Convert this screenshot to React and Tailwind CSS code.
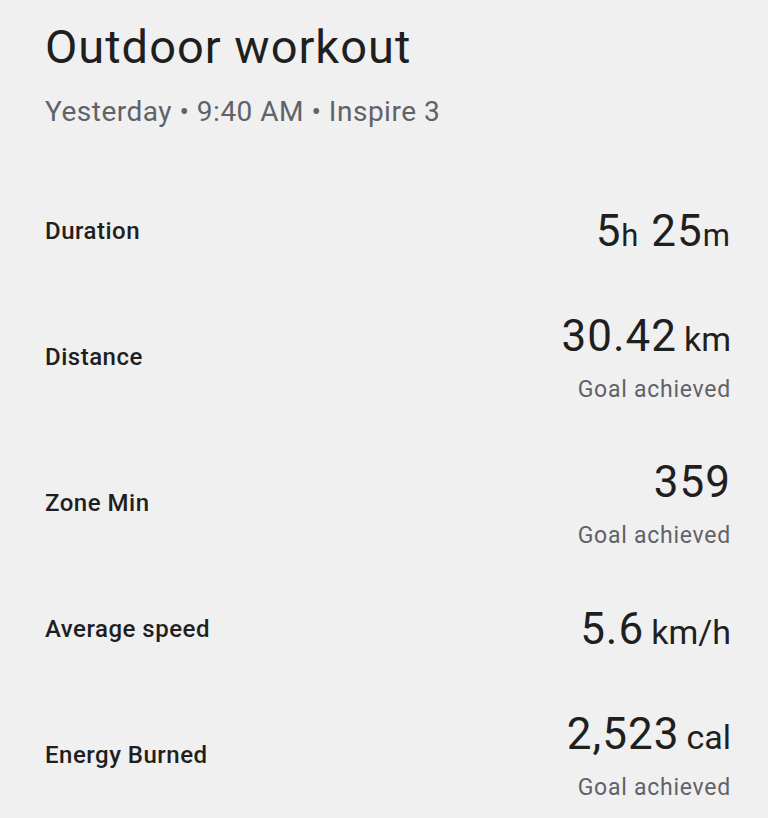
import React from "react";

const rows = [
  { label: "Duration", value: <><span>5</span><span className="text-[31px] leading-none">h</span><span> 25</span><span className="text-[31px] leading-none">m</span></>, goal: false },
  { label: "Distance", value: <><span>30.42</span><span className="ml-[7px] text-[34px] leading-none tracking-normal">km</span></>, goal: true },
  { label: "Zone Min", value: <span>359</span>, goal: true },
  { label: "Average speed", value: <><span>5.6</span><span className="ml-[7px] text-[34px] leading-none tracking-normal">km/h</span></>, goal: false },
  { label: "Energy Burned", value: <><span>2,523</span><span className="ml-[7px] text-[34px] leading-none tracking-normal">cal</span></>, goal: true },
];

export default function App() {
  return (
    <div className="min-h-screen bg-[#f0f0f0] pl-[45px] pr-[37px] pt-[19px] text-[#1f1f1f] font-['Roboto',sans-serif]">
      <h1 className="text-[47px] leading-[56px] tracking-[1px] font-normal">Outdoor workout</h1>
      <p className="mt-[19px] text-[28px] leading-[36px] tracking-[0.5px] text-[#5f6368]">
        Yesterday • 9:40 AM • Inspire 3
      </p>
      <div className="mt-[48px] flex flex-col">
        {rows.map((r) => (
          <div
            key={r.label}
            className={`flex items-center justify-between ${r.goal ? "py-[26px]" : "py-[27px]"}`}
          >
            <div className="text-[24px] leading-[32px] font-medium tracking-[0.5px]">{r.label}</div>
            <div className="flex flex-col items-end">
              <div className="text-[44px] leading-[52px] tracking-[1px] whitespace-pre">{r.value}</div>
              {r.goal && (
                <div className="mt-[14px] text-[23px] leading-[28px] tracking-[0.75px] text-[#5f6368]">
                  Goal achieved
                </div>
              )}
            </div>
          </div>
        ))}
      </div>
    </div>
  );
}
